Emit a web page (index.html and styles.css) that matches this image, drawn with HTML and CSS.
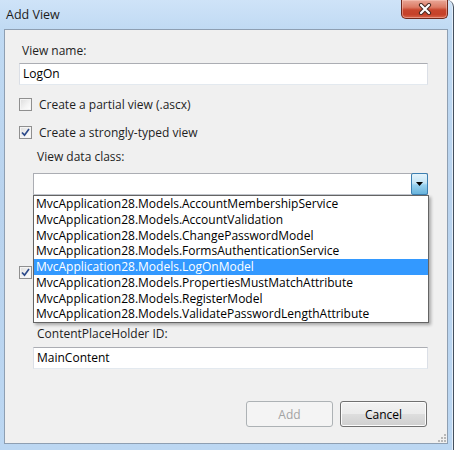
FILE: index.html
```html
<!DOCTYPE html>
<html lang="en">
<head>
<meta charset="utf-8">
<title>Add View</title>
<link rel="stylesheet" href="styles.css">
</head>
<body>
<div class="window">
  <div class="titlebar">
    <span class="title">Add View</span>
    <button class="close" type="button" aria-label="Close">
      <svg width="16" height="12" viewBox="0 0 16 12">
        <path d="M4 2 L12 10 M12 2 L4 10" stroke="#4a2a22" stroke-width="4.2" stroke-linecap="round"/>
        <path d="M4 2 L12 10 M12 2 L4 10" stroke="#ffffff" stroke-width="2.2" stroke-linecap="round"/>
      </svg>
    </button>
  </div>

  <div class="client">
    <div class="label">View name:</div>
    <div class="textbox">LogOn</div>

    <label class="check-row first">
      <span class="checkbox"></span>
      <span>Create a partial view (.ascx)</span>
    </label>
    <label class="check-row">
      <span class="checkbox checked">
        <svg width="9" height="9" viewBox="0 0 9 9"><path d="M1 4.5 L3.5 7.2 L8 1" fill="none" stroke="#2c4a8a" stroke-width="1.7"/></svg>
      </span>
      <span>Create a strongly-typed view</span>
    </label>

    <div class="group">
      <div class="label">View data class:</div>
      <div class="combo-wrap">
        <div class="combo">
          <span class="combo-text"></span>
          <span class="combo-btn">
            <svg width="7" height="4" viewBox="0 0 7 4"><path d="M0 0 H7 L3.5 4 Z" fill="#000"/></svg>
          </span>
        </div>
        <ul class="dropdown">
          <li>MvcApplication28.Models.AccountMembershipService</li>
          <li>MvcApplication28.Models.AccountValidation</li>
          <li>MvcApplication28.Models.ChangePasswordModel</li>
          <li>MvcApplication28.Models.FormsAuthenticationService</li>
          <li class="selected">MvcApplication28.Models.LogOnModel</li>
          <li>MvcApplication28.Models.PropertiesMustMatchAttribute</li>
          <li>MvcApplication28.Models.RegisterModel</li>
          <li>MvcApplication28.Models.ValidatePasswordLengthAttribute</li>
        </ul>
      </div>
      <!-- second combobox, covered while the list is open -->
      <div class="combo content-combo">
        <span class="combo-text"></span>
        <span class="combo-btn">
          <svg width="7" height="4" viewBox="0 0 7 4"><path d="M0 0 H7 L3.5 4 Z" fill="#000"/></svg>
        </span>
      </div>
    </div>

    <div class="check-row master">
      <span class="checkbox checked">
        <svg width="9" height="9" viewBox="0 0 9 9"><path d="M1 4.5 L3.5 7.2 L8 1" fill="none" stroke="#2c4a8a" stroke-width="1.7"/></svg>
      </span>
    </div>

    <div class="group">
      <div class="textbox master-path"></div>
      <div class="label cph">ContentPlaceHolder ID:</div>
      <div class="textbox">MainContent</div>
    </div>

    <div class="buttons">
      <button class="btn" type="button" disabled>Add</button>
      <button class="btn" type="button">Cancel</button>
    </div>

    <span class="grip">
      <svg width="10" height="10" viewBox="0 0 10 10" fill="#b8b8b8">
        <rect x="8" y="2" width="2" height="2"/>
        <rect x="5" y="5" width="2" height="2"/><rect x="8" y="5" width="2" height="2"/>
        <rect x="2" y="8" width="2" height="2"/><rect x="5" y="8" width="2" height="2"/><rect x="8" y="8" width="2" height="2"/>
      </svg>
    </span>
  </div>
</div>
</body>
</html>
```

FILE: styles.css
```css
* {
  box-sizing: border-box;
}

html, body {
  margin: 0;
  padding: 0;
  background: #ffffff;
}

body {
  font-family: "Open Sans", "Noto Sans", sans-serif;
  font-size: 12px;
  color: #1e1e1e;
}

/* window frame with the glass-like title area */
.window {
  width: 454px;
  height: 450px;
  padding: 0 5px 6px 4px;
  display: flex;
  flex-direction: column;
  background: linear-gradient(to bottom, #cfe3f8 0, #c0daf3 30px, #b9d3ee 200px, #bcd7f2 100%);
  border-right: 1px solid #44505e;
  border-top-right-radius: 7px;
  box-shadow: inset -1px 0 0 #e3eefa;
}

.titlebar {
  height: 29px;
  flex: none;
  display: flex;
  justify-content: space-between;
  align-items: flex-start;
}

.title {
  margin: 7px 0 0 2px;
  font-size: 12.5px;
  line-height: 16px;
  color: #1c1c1c;
}

.close {
  width: 47px;
  height: 19px;
  margin: 0;
  padding: 0;
  display: flex;
  align-items: center;
  justify-content: center;
  border: 1px solid #70291c;
  border-top: none;
  border-radius: 0 0 5px 5px;
  background: linear-gradient(to bottom, #e9a797 0, #dc7b65 40%, #c8462e 55%, #c54129 80%, #d8644a 100%);
  box-shadow: inset 0 0 0 1px rgba(255, 210, 200, 0.45);
}

/* dialog body */
.client {
  position: relative;
  flex: 1;
  display: flex;
  flex-direction: column;
  padding: 13px 19px 0 14px;
  background: #f0f0f0;
  border: 1px solid #8e9fb2;
}

.label {
  margin-left: 3px;
  line-height: 16px;
}

.textbox {
  height: 22px;
  margin-top: 4px;
  padding: 0 3px;
  line-height: 20px;
  color: #000;
  background: #ffffff;
  border: 1px solid #dbdfe6;
  border-top-color: #abadb3;
  border-bottom-color: #e3e9ef;
}

.check-row {
  display: flex;
  align-items: center;
  gap: 7px;
  height: 16px;
  margin-top: 12px;
}

.check-row.first {
  margin-top: 11px;
}

.check-row.master {
  margin-top: 19px;
}

.checkbox {
  width: 13px;
  height: 13px;
  flex: none;
  display: flex;
  align-items: center;
  justify-content: center;
  border: 1px solid #8f8f8f;
  background: linear-gradient(135deg, #dcdcdc 0, #f4f4f4 60%, #ffffff 100%);
  box-shadow: inset 0 0 0 1px #f4f4f4;
}

/* indented block under the strongly-typed option */
.group {
  display: flex;
  flex-direction: column;
  padding-left: 14px;
}

.group .label {
  margin-left: 4px;
  margin-top: 9px;
}

.combo-wrap {
  position: relative;
  margin-top: 8px;
}

.combo {
  height: 22px;
  display: flex;
  background: #ffffff;
  border: 1px solid #abadb3;
  border-bottom-color: #c5c9d0;
}

.content-combo {
  margin-top: 28px;
}

.combo-text {
  flex: 1;
  padding: 0 3px;
  line-height: 20px;
  color: #000;
}

.combo-btn {
  width: 17px;
  margin: -1px -1px -1px 0;
  display: flex;
  align-items: center;
  justify-content: center;
  border: 1px solid #3c7fb1;
  border-radius: 2px;
  background: linear-gradient(to bottom, #e5f4fc 0, #c4e5f6 45%, #98d1ef 55%, #68b3db 100%);
}

/* open list of the combobox, drawn over the rest of the form */
.dropdown {
  position: absolute;
  top: 100%;
  left: 0;
  right: -1px;
  z-index: 2;
  margin: 0;
  padding: 0;
  list-style: none;
  background: #ffffff;
  border: 1px solid #646464;
  box-shadow: 2px 2px 3px rgba(0, 0, 0, 0.3);
}

.dropdown li {
  height: 15.75px;
  padding-left: 2px;
  line-height: 15.75px;
  color: #000;
  white-space: nowrap;
}

.dropdown li.selected {
  background: #3399ff;
  color: #ffffff;
}

.master-path {
  margin-top: 6px;
}

.group .label.cph {
  margin-top: 18px;
}

.group .textbox:last-child {
  margin-top: 5px;
}

.buttons {
  display: flex;
  justify-content: flex-end;
  gap: 7px;
  margin-top: 32px;
  margin-right: 1px;
}

.btn {
  width: 87px;
  height: 26px;
  padding: 0;
  font-family: inherit;
  font-size: 12px;
  color: #000;
  border: 1px solid #707070;
  border-radius: 3px;
  background: linear-gradient(to bottom, #f2f2f2 0, #ebebeb 48%, #dddddd 52%, #cfcfcf 100%);
  box-shadow: inset 0 0 0 1px #fcfcfc;
}

.btn:disabled {
  color: #a3a3a3;
  border-color: #adb2b5;
  background: #f4f4f4;
  box-shadow: none;
}

.grip {
  position: absolute;
  right: 1px;
  bottom: 1px;
  display: flex;
}
```
